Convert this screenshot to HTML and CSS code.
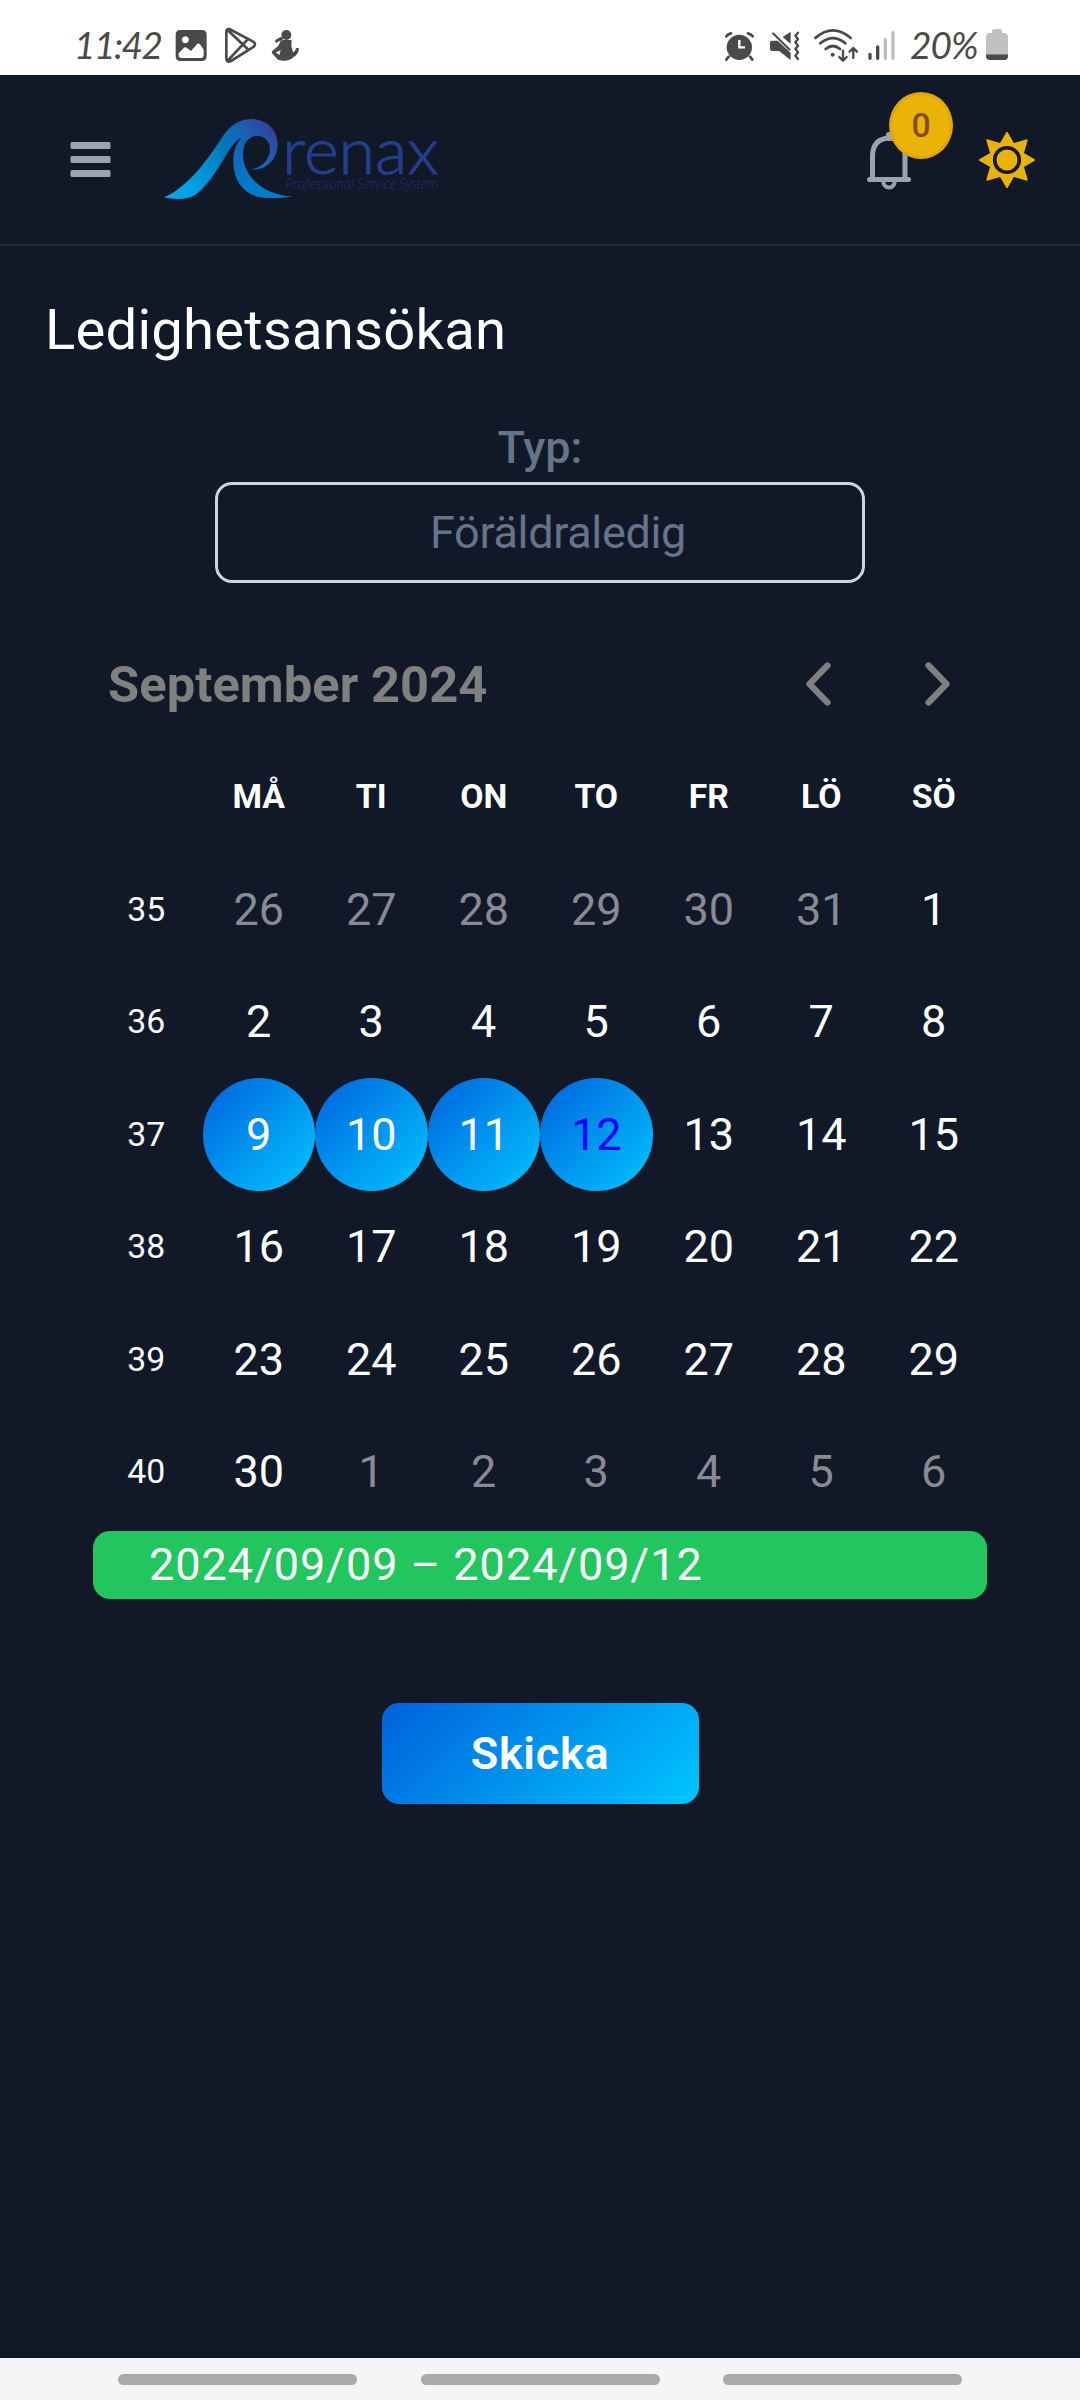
FILE: index.html
```html
<!DOCTYPE html>
<html lang="sv">
<head>
<meta charset="utf-8">
<title>Ledighetsansökan</title>
<link rel="stylesheet" href="styles.css">
</head>
<body>
<div class="status">
  <span class="status-time">11:42</span>
  <svg class="status-left" width="130" height="40" viewBox="400 75 390 120">
    <path fill="#4a4a4a" fill-rule="evenodd" d="M422 90h65q14 0 14 14v65q0 14-14 14h-65q-14 0-14-14v-65q0-14 14-14zM437 109a10.500 10.500 0 1 0 .1 0zM417 160v5q0 9 9 9h58q8 0 8-9v-16l-11-16q-5-5-9 0l-18 20-13-10q-4-3-8 0z"/>
    <g fill="none" stroke="#4a4a4a" stroke-width="8" stroke-linejoin="round" stroke-linecap="round"><path d="M560 95q0-9 9-8l70 37q14 8 0 18l-65 41q-14 6-14-8zM566 92l58 55M566 180l58-62" /></g>
    <g fill="#4a4a4a"><circle cx="740" cy="105" r="15"/><path d="M705 124q7-11 22-14l3 10q-12 2-19 9zM724 120h32l-1 18 5 19q8-3 9-12 4-2 9 0-1 18-16 26-14 13-32 11-14 0-20-8l-13-14q-2-4 1-7l18-16zM708 157l11 8 4-14z" fill-rule="evenodd"/></g>
  </svg>
  <svg class="status-right" width="177" height="40" viewBox="60 75 531 120">
    <g fill="#4a4a4a"><circle cx="118" cy="142" r="38"/><path d="M86 170l-7 9M150 170l7 9M79 109q5-7 14-9M158 109q-5-7-14-9" stroke="#4a4a4a" stroke-width="8" stroke-linecap="round" fill="none"/><path d="M118 120v22h17" fill="none" stroke="#fff" stroke-width="7"/>
    <path d="M216 122h17l39 37v21l-35-27h-21q-6 0-6-6v-19q0-6 6-6zM272 95v37l-24-21z"/></g>
    <g fill="none" stroke="#4a4a4a" stroke-linecap="round" stroke-linejoin="round"><path stroke-width="6" d="M219 100l50 49"/><path stroke-width="7" d="M294 98l-8 9 8 10-8 10 8 10-8 10 8 10-8 10 8 10"/>
    <path stroke-width="8" d="M346 114q53-46 106 0M361 130q38-31 75 0M377 147q22-18 43 0"/><path stroke-width="7" d="M429 152v29M418 171l11 11 11-11M460 174v-29M449 155l11-11 11 11"/></g>
    <circle cx="398" cy="164" r="6" fill="#4a4a4a"/>
    <g fill="none" stroke-width="10" stroke-linecap="round"><path stroke="#4a4a4a" d="M510 163v12M533 141v34"/><path stroke="#bdbdbd" d="M556 119v56M579 98v77"/></g>
  </svg>
  <span class="status-charge">20%</span>
  <svg width="22" height="32" viewBox="0 0 22 32"><path fill="#c1c1c1" d="M6 2q0-2 2-2h6q2 0 2 2v2h2q4 0 4 4v19q0 4-4 4H4q-4 0-4-4V8q0-4 4-4h2z"/><path fill="#4a4a4a" d="M0 25.500h22V27q0 4-4 4H4q-4 0-4-4z"/></svg>
</div>

<header class="topbar">
  <svg class="menu" width="41" height="37" viewBox="0 0 41 37" fill="#9ca3af"><rect x=".5" y="1" width="40" height="7" rx="1.500"/><rect x=".5" y="15" width="40" height="7" rx="1.500"/><rect x=".5" y="29" width="40" height="7" rx="1.500"/></svg>
  <svg class="logo" width="277" height="83" viewBox="369 81 831 249">
    <defs><linearGradient id="wave" gradientUnits="userSpaceOnUse" x1="455" y1="300" x2="700" y2="110"><stop offset="0" stop-color="#00a3e6"/><stop offset=".48" stop-color="#0079bf"/><stop offset=".72" stop-color="#1765b5"/><stop offset="1" stop-color="#373f9b"/></linearGradient>
    <linearGradient id="tail" gradientUnits="userSpaceOnUse" x1="600" y1="160" x2="700" y2="320"><stop offset="0" stop-color="#1765b5"/><stop offset=".5" stop-color="#0079c4"/><stop offset="1" stop-color="#007dc8"/></linearGradient></defs>
    <path fill="url(#wave)" d="M371 319C440 292 500 210 541 147C562 111 594 84 632 84C682 84 713 118 713 160C713 205 680 239 633 236C668 229 691 203 690 172C689 147 670 134 650 135C622 136 608 160 609 195L581 205C582 178 590 158 604 141C590 146 576 164 560 190C530 240 500 290 460 315C440 326 400 326 371 319Z"/>
    <path fill="url(#tail)" d="M604 141Q620 135 634 138C616 146 608 167 609 195C612 250 660 310 757 317C720 322 690 321 670 320C612 313 580 270 580 210C580 182 588 158 604 141Z"/>
    <text class="logo-name" x="727" y="248" textLength="468" lengthAdjust="spacingAndGlyphs">renax</text>
    <text class="logo-tag" x="737" y="293" textLength="458" lengthAdjust="spacingAndGlyphs">Professional Service System</text>
  </svg>
  <div class="bell">
    <svg width="46" height="60" viewBox="0 0 46 60" fill="none" stroke="#9ca3af"><path stroke-width="5" d="M6.500 50V25.500Q7 9 23 8Q39 9 39 25.500V50"/><path stroke-width="5" stroke-linecap="round" d="M3.500 49.500H42.500"/><path stroke-width="4" d="M17 51q1 6.500 6 6.500t6-6.500"/><path stroke-width="6" stroke-linecap="round" d="M23 5v3"/></svg>
    <span class="badge">0</span>
  </div>
  <svg class="sun" width="58" height="58" viewBox="-29 -29 58 58"><path fill="#eab308" stroke="#eab308" stroke-width="1.600" stroke-linejoin="round" d="M0-27.300L6.500-16 19.900-19.900 16-6.500 27.300 0 16 6.500 19.900 19.900 6.500 16 0 27.300-6.500 16-19.900 19.900-16 6.500-27.300 0-16-6.500-19.900-19.900-6.500-16Z"/><circle r="12.300" fill="none" stroke="#111827" stroke-width="3.600"/></svg>
</header>

<main class="page">
  <h1 class="title">Ledighetsansökan</h1>
  <form class="form">
    <label class="label">Typ:</label>
    <div class="select">Föräldraledig</div>
    <section class="calendar">
      <div class="cal-head">
        <span class="month">September 2024</span>
        <div class="arrows">
          <svg width="28" height="46" viewBox="0 0 28 46"><path d="M23.500 4.500L5.500 23L23.500 41.500"/></svg>
          <svg width="28" height="46" viewBox="0 0 28 46"><path d="M4.500 4.500L22.500 23L4.500 41.500"/></svg>
        </div>
      </div>
      <div class="grid">
        <b></b><b>MÅ</b><b>TI</b><b>ON</b><b>TO</b><b>FR</b><b>LÖ</b><b>SÖ</b>
        <i>35</i><span class="out">26</span><span class="out">27</span><span class="out">28</span><span class="out">29</span><span class="out">30</span><span class="out">31</span><span>1</span>
        <i>36</i><span>2</span><span>3</span><span>4</span><span>5</span><span>6</span><span>7</span><span>8</span>
        <i>37</i><span class="sel">9</span><span class="sel">10</span><span class="sel">11</span><span class="sel today">12</span><span>13</span><span>14</span><span>15</span>
        <i>38</i><span>16</span><span>17</span><span>18</span><span>19</span><span>20</span><span>21</span><span>22</span>
        <i>39</i><span>23</span><span>24</span><span>25</span><span>26</span><span>27</span><span>28</span><span>29</span>
        <i>40</i><span>30</span><span class="out">1</span><span class="out">2</span><span class="out">3</span><span class="out">4</span><span class="out">5</span><span class="out">6</span>
      </div>
    </section>
    <div class="range">2024/09/09 – 2024/09/12</div>
    <button class="send" type="button">Skicka</button>
  </form>
</main>

<nav class="navbar"><span></span><span></span><span></span></nav>
</body>
</html>
```
FILE: styles.css
```css
* { box-sizing: border-box; }

body {
  margin: 0;
  width: 1080px;
  height: 2400px;
  display: flex;
  flex-direction: column;
  overflow: hidden;
  background: #111827;
  color: #fff;
  font-family: Roboto, "Liberation Sans", sans-serif;
  font-size: 45px;
}

svg { display: block; flex: none; }

.status {
  height: 75px;
  flex: none;
  display: flex;
  align-items: center;
  padding: 14px 72px 0 74px;
  background: #fff;
  color: #4a4a4a;
  font-family: Lato, sans-serif;
  font-size: 37px;
}
.status-time { width: 99px; font-style: italic; letter-spacing: -1.500px; }
.status-right { margin-left: auto; }
.status-charge { width: 89px; flex: none; padding-left: 13px; font-style: italic; letter-spacing: -1px; }

.topbar {
  height: 171px;
  flex: none;
  display: flex;
  align-items: center;
  padding: 0 44px 0 70px;
  border-bottom: 2px solid #1f2937;
}
.logo { margin-left: 52px; overflow: visible; }
.logo-name { font: 300 194px "Lato", sans-serif; fill: #253f8e; stroke: #253f8e; stroke-width: 3px; }
.logo-tag { font: italic 300 42px "Open Sans", sans-serif; fill: #203170; }
.bell { position: relative; margin-left: auto; margin-right: 66px; }
.badge {
  position: absolute;
  left: 23px;
  top: -38px;
  width: 64px;
  height: 67px;
  display: flex;
  align-items: center;
  justify-content: center;
  border: 3px solid #e0a70b;
  border-radius: 50%;
  background: #eab308;
  color: #854d0e;
  font-size: 33.750px;
  font-weight: 500;
}

.page { flex: 1; padding-top: 44.500px; }
.title {
  margin: 0 0 45px 45px;
  font-size: 56.250px;
  font-weight: 400;
  line-height: 78.750px;
  letter-spacing: 0.180px;
}
.form { display: flex; flex-direction: column; align-items: center; }
.label { padding-top: 1px; color: #64748b; font-weight: 500; line-height: 66.500px; }
.select {
  width: 650px;
  height: 101.250px;
  display: flex;
  align-items: center;
  justify-content: center;
  padding-left: 36px;
  border: 3px solid #d1d5db;
  border-radius: 17px;
  color: #64748b;
  letter-spacing: -0.350px;
}

.calendar { width: 900px; margin-top: 45px; }
.cal-head {
  height: 112.500px;
  display: flex;
  align-items: center;
  justify-content: space-between;
  padding: 0 38px 0 18px;
}
.month { color: #808080; font-size: 50.625px; font-weight: 700; letter-spacing: 0.080px; }
.arrows { display: flex; gap: 92px; }
.arrows path { fill: none; stroke: #808080; stroke-width: 6.200px; stroke-linecap: round; stroke-linejoin: round; }
.grid { display: grid; grid-template-columns: repeat(8, 112.500px); grid-auto-rows: 112.500px; }
.grid > * { display: flex; align-items: center; justify-content: center; }
.grid b { font-size: 33.750px; font-weight: 700; }
.grid i { font-size: 33.750px; font-style: normal; }
.out { color: #888b93; }
.sel { border-radius: 50%; background: linear-gradient(135deg, #0061dc, #00c6ff); }
.today { color: #00f; }

.range {
  width: 894px;
  height: 68px;
  margin-top: 2.500px;
  display: flex;
  align-items: center;
  padding-left: 56px;
  border-radius: 17px;
  background: #22c55e;
  letter-spacing: 1px;
}
.send {
  width: 317px;
  height: 101px;
  margin-top: 104px;
  padding: 0;
  border: 0;
  border-radius: 17px;
  background: linear-gradient(135deg, #0061dc, #00c6ff);
  color: #fff;
  font: 600 45px Roboto, sans-serif;
  letter-spacing: 0.700px;
}

.navbar {
  height: 42px;
  flex: none;
  display: flex;
  align-items: center;
  gap: 63.500px;
  padding: 1px 0 0 118px;
  background: #f5f5f8;
}
.navbar span { width: 239px; height: 11px; border-radius: 6px; background: #aaa; }
```
